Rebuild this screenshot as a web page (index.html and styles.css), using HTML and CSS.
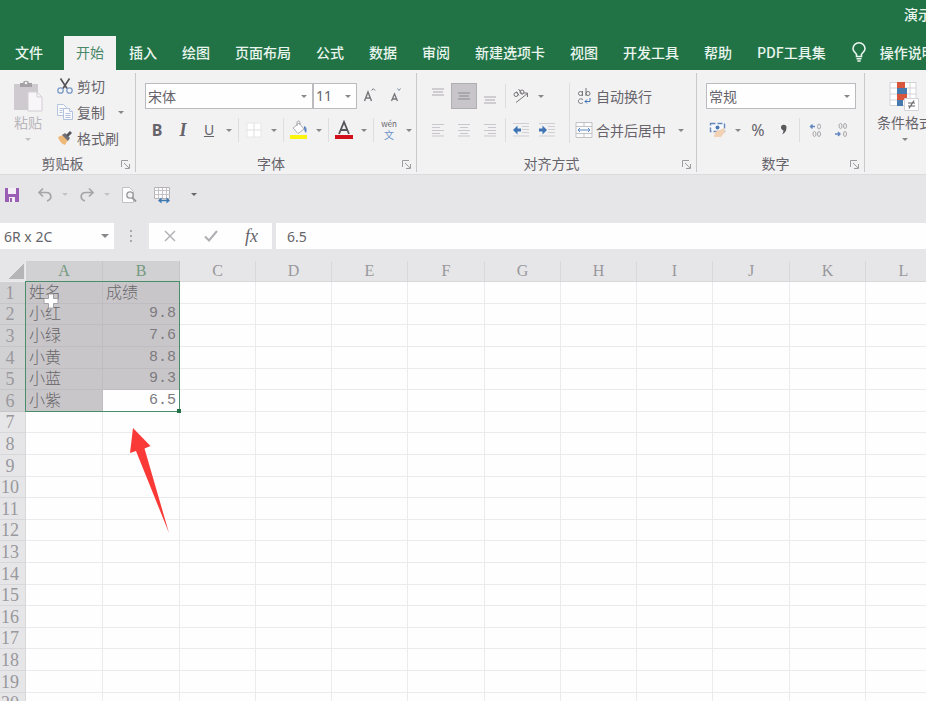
FILE: index.html
```html
<!DOCTYPE html>
<html lang="zh-CN">
<head>
  <meta charset="UTF-8">
  <meta name="viewport" content="width=device-width, initial-scale=1.0">
  <title>演示</title>
  <link rel="stylesheet" href="styles.css">
</head>
<body>
  <header class="top">
    <div class="title-bar">演示</div>
    <nav class="tabs">
      <a href="#" class="tab tab-file">文件</a>
      <a href="#" class="tab active">开始</a>
      <a href="#" class="tab">插入</a>
      <a href="#" class="tab">绘图</a>
      <a href="#" class="tab">页面布局</a>
      <a href="#" class="tab">公式</a>
      <a href="#" class="tab">数据</a>
      <a href="#" class="tab">审阅</a>
      <a href="#" class="tab">新建选项卡</a>
      <a href="#" class="tab">视图</a>
      <a href="#" class="tab">开发工具</a>
      <a href="#" class="tab">帮助</a>
      <a href="#" class="tab">PDF工具集</a>
      <a href="#" class="tab tell-me">
        <svg width="16" height="20" viewBox="0 1 16 20" fill="none" stroke="#eaf5ee" stroke-width="1.6">
          <path d="M5.5 15.5v-2.2C4.600 11.500 2 10.300 2 7.800a6 6 0 0 1 12 0c0 2.500-2.600 3.700-3.500 5.500v2.200z"/>
          <path d="M5.500 17.700h5M6.300 20h3.400"/>
        </svg>
        操作说明搜索
      </a>
    </nav>
  </header>

  <main>
    <div class="ribbon">
      <section class="group">
        <div class="group-body">
          <button type="button" class="big-btn muted">
            <svg width="32" height="32" viewBox="0 0 32 32">
              <path d="M2 4h24v26H2z" fill="#cfc9d0"/>
              <path d="M8 7V3h3c0-3 6-3 6 0h3v4z" fill="#a5a1a6"/>
              <circle cx="14" cy="3" r="1.300" fill="#f3f2f3"/>
              <path d="M16 12h9l5 5v14H16z" fill="#f8f6f8" stroke="#d3ced4"/>
              <path d="M25 12v5h5" fill="none" stroke="#d3ced4"/>
            </svg>
            <span>粘贴</span>
            <i class="caret"></i>
          </button>
          <div class="clip-list">
            <button type="button" class="text-btn">
              <svg width="18" height="18" viewBox="0 0 18 18" fill="none">
                <path d="M4.500 1.500l6.500 10M13.500 1.500L7 11.500" stroke="#55555b" stroke-width="1.700"/>
                <circle cx="4.500" cy="13.500" r="2.700" stroke="#7d9cc8" stroke-width="1.300"/>
                <circle cx="13.500" cy="13.500" r="2.700" stroke="#7d9cc8" stroke-width="1.300"/>
              </svg>
              剪切
            </button>
            <button type="button" class="text-btn">
              <svg width="18" height="18" viewBox="0 0 18 18" fill="#fafafd" stroke="#b3c3de">
                <path d="M1.500 1.500h6l3 3v8h-9z"/>
                <path d="M3.500 5.500h4M3.500 7.500h3M3.500 9.500h3"/>
                <path d="M7.500 5.500h6l3 3v8h-9z"/>
                <path d="M13.500 5.500v3h3M9.500 10.500h5M9.500 12.500h5M9.500 14.500h5"/>
              </svg>
              复制
              <i class="caret copy-caret"></i>
            </button>
            <button type="button" class="text-btn">
              <svg width="18" height="18" viewBox="0 0 18 18">
                <path d="M2 8l5-2 5 5-3 5c-3-1-6-4-7-8z" fill="#eeb878"/>
                <path d="M6 6l3-2 5 5-2 3z" fill="#707078"/>
                <path d="M10 6l4-4 2 2-4 4z" fill="#55555c"/>
              </svg>
              格式刷
            </button>
          </div>
        </div>
        <div class="group-foot"><span>剪贴板</span><button type="button" class="launcher" aria-label="剪贴板设置"><svg width="9" height="9" viewBox="0 0 9 9" fill="none" stroke="#9c9a9e"><path d="M.5 7V.5H7M3 3l5 5M8.500 4v4.500H4"/></svg></button></div>
      </section>

      <section class="group">
        <div class="group-body flush">
          <div class="rows">
            <div class="row fields">
              <label class="combo font-name"><select aria-label="字体"><option>宋体</option></select></label>
              <label class="combo font-size"><select aria-label="字号"><option>11</option></select></label>
              <button type="button" class="tool" aria-label="增大字号">
                <svg width="16" height="18" viewBox="0 0 16 18" fill="none" stroke="#77757a" stroke-width="1.400"><path d="M2.500 14L6 5l3.500 9M4 11h4"/><path d="M9.500 3.500l1.800-1.800 1.800 1.800" stroke-width="1"/></svg>
              </button>
              <button type="button" class="tool" aria-label="减小字号">
                <svg width="16" height="18" viewBox="0 0 16 18" fill="none" stroke="#77757a" stroke-width="1.300"><path d="M3.500 14L6.500 7 9.500 14M4.500 12h4"/><path d="M9.500 1.500l1.500 2 1.500-2" stroke-width="1" stroke="#7d8ba3"/></svg>
              </button>
            </div>
            <div class="row">
              <button type="button" class="tool bold">B</button>
              <button type="button" class="tool italic">I</button>
              <button type="button" class="tool underline">U</button>
              <button type="button" class="drop" aria-label="下划线选项"><i class="caret"></i></button>
              <i class="sep"></i>
              <button type="button" class="tool" aria-label="边框">
                <svg width="16" height="16" viewBox="0 0 16 16"><path d="M1 1h14v14H1z" fill="#fff" stroke="#e6e5e8"/><path d="M8 1v14M1 8h14" stroke="#dedde0"/></svg>
              </button>
              <button type="button" class="drop" aria-label="边框选项"><i class="caret"></i></button>
              <i class="sep"></i>
              <button type="button" class="tool" aria-label="填充颜色">
                <svg width="18" height="20" viewBox="0 0 18 20"><path d="M3 8l6-5 5 6-6 4.500z" fill="#fdfdfd" stroke="#b0aeb3"/><path d="M7 6V2.500c0-2 3-2 3 0V5" fill="none" stroke="#a3a1a6"/><path d="M14 6c3 1 3 4 2 7-2-2-2-4-2-7z" fill="#5f87bd"/><path d="M0 15h17v4H0z" fill="#fbf50d"/></svg>
              </button>
              <button type="button" class="drop" aria-label="填充颜色选项"><i class="caret"></i></button>
              <i class="sep"></i>
              <button type="button" class="tool" aria-label="字体颜色">
                <svg width="18" height="20" viewBox="0 0 18 20"><path d="M4 14L9 2l5 12M6 10h6" fill="none" stroke="#55535a" stroke-width="1.800"/><path d="M0 15h18v4H0z" fill="#d20f1c"/></svg>
              </button>
              <button type="button" class="drop" aria-label="字体颜色选项"><i class="caret"></i></button>
              <i class="sep"></i>
              <button type="button" class="tool phonetic" aria-label="拼音指南"><small>wén</small><b>文</b></button>
              <button type="button" class="drop" aria-label="拼音选项"><i class="caret"></i></button>
            </div>
          </div>
        </div>
        <div class="group-foot"><span>字体</span><button type="button" class="launcher" aria-label="字体设置"><svg width="9" height="9" viewBox="0 0 9 9" fill="none" stroke="#9c9a9e"><path d="M.5 7V.5H7M3 3l5 5M8.500 4v4.500H4"/></svg></button></div>
      </section>

      <section class="group">
        <div class="group-body">
          <div class="rows">
            <div class="row">
              <button type="button" class="tool" aria-label="顶端对齐"><svg width="14" height="20" viewBox="0 0 14 20" stroke="#cfcdd1" stroke-width="2"><path d="M1 3h12M2 6h10M1 9h12"/></svg></button>
              <button type="button" class="tool pressed" aria-label="垂直居中"><svg width="14" height="20" viewBox="0 0 14 20" stroke="#aaa8ad" stroke-width="2"><path d="M1 7h12M2 10h10M1 13h12"/></svg></button>
              <button type="button" class="tool" aria-label="底端对齐"><svg width="14" height="20" viewBox="0 0 14 20" stroke="#cfcdd1" stroke-width="2"><path d="M1 11h12M2 14h10M1 17h12"/></svg></button>
              <i class="sep"></i>
              <button type="button" class="tool" aria-label="方向">
                <svg width="18" height="16" viewBox="0 0 18 16" fill="none" stroke="#77757a"><circle cx="4" cy="6.500" r="2"/><path d="M4.500 3.500l2.500 4M6.500 1l4 5.500"/><circle cx="10" cy="4" r="2"/><path d="M4 14.500L15.500 5.500M11.500 5h4v4"/></svg>
              </button>
              <button type="button" class="drop" aria-label="方向选项"><i class="caret"></i></button>
            </div>
            <div class="row">
              <button type="button" class="tool" aria-label="左对齐"><svg width="14" height="14" viewBox="0 0 14 14" stroke="#c9c7cb"><path d="M1 1.500h12M1 4.500h8M1 7.500h12M1 10.500h8M1 13h12"/></svg></button>
              <button type="button" class="tool" aria-label="居中"><svg width="14" height="14" viewBox="0 0 14 14" stroke="#c9c7cb"><path d="M1 1.500h12M3 4.500h8M1 7.500h12M3 10.500h8M1 13h12"/></svg></button>
              <button type="button" class="tool" aria-label="右对齐"><svg width="14" height="14" viewBox="0 0 14 14" stroke="#c9c7cb"><path d="M1 1.500h12M5 4.500h8M1 7.500h12M5 10.500h8M1 13h12"/></svg></button>
              <i class="sep"></i>
              <button type="button" class="tool" aria-label="减少缩进"><svg width="18" height="16" viewBox="0 0 18 16"><path d="M1 1.500h16M10 4.500h7M10 7.500h7M10 10.500h7M1 14h16" stroke="#d0ced2"/><path d="M1 8l4.500-4.500v3H9v3H5.500v3z" fill="#3e74b4"/></svg></button>
              <button type="button" class="tool" aria-label="增加缩进"><svg width="18" height="16" viewBox="0 0 18 16"><path d="M1 1.500h16M10 4.500h7M10 7.500h7M10 10.500h7M1 14h16" stroke="#d0ced2"/><path d="M9 8L4.500 3.500v3H1v3h3.500v3z" fill="#3e74b4"/></svg></button>
            </div>
          </div>
          <i class="sep tall"></i>
          <div class="rows">
            <div class="row">
              <button type="button" class="text-btn">
                <svg width="18" height="18" viewBox="0 0 18 18" fill="none" stroke="#77757a"><path d="M7.500 4v5M11 1v8"/><circle cx="5.500" cy="6.500" r="2"/><circle cx="13" cy="6.500" r="2"/><path d="M8 12.500c-3-1.500-5 0-4.500 2.200.5 2 3 2.300 4.500 1"/><path d="M15 11v3.500h-5M12 12.500l-2 2 2 2" stroke="#3e74b4"/></svg>
                自动换行
              </button>
            </div>
            <div class="row">
              <button type="button" class="text-btn">
                <svg width="18" height="18" viewBox="0 0 18 18" fill="none"><path d="M1 1.500h16v15H1zM1 5.500h16M1 12.500h16M9 1.500v4M9 12.500v4" fill="#fbfbfc" stroke="#c3c1c6"/><path d="M3 9h12M5 7L3 9l2 2M13 7l2 2-2 2" stroke="#5a8ac2"/></svg>
                合并后居中
              </button>
              <button type="button" class="drop merge-drop" aria-label="合并选项"><i class="caret"></i></button>
            </div>
          </div>
        </div>
        <div class="group-foot"><span>对齐方式</span><button type="button" class="launcher" aria-label="对齐设置"><svg width="9" height="9" viewBox="0 0 9 9" fill="none" stroke="#9c9a9e"><path d="M.5 7V.5H7M3 3l5 5M8.500 4v4.500H4"/></svg></button></div>
      </section>

      <section class="group">
        <div class="group-body">
          <div class="rows">
            <div class="row fields">
              <label class="combo number-format"><select aria-label="数字格式"><option>常规</option></select></label>
            </div>
            <div class="row">
              <button type="button" class="tool" aria-label="会计数字格式">
                <svg width="18" height="16" viewBox="0 0 18 16"><path d="M1.500 1.500h14v8h-14z" fill="#f6f8fb" stroke="#6689bd" stroke-width="1.400" stroke-dasharray="5 2"/><circle cx="8.500" cy="5.500" r="2" fill="#4d79b3"/><path d="M6 10l9-4 1 4-4 5H5z" fill="#f1d2b4"/></svg>
              </button>
              <button type="button" class="drop" aria-label="货币选项"><i class="caret"></i></button>
              <button type="button" class="tool percent">%</button>
              <button type="button" class="tool" aria-label="千位分隔样式"><svg width="8" height="12" viewBox="0 0 8 12"><path d="M1 3.500a2.600 2.600 0 1 1 5.500 0C6.500 7 5 9 2 10.500 3 9 3.500 8 3.300 6.200 2 6 1 5 1 3.500z" fill="#5a585d"/></svg></button>
              <i class="sep"></i>
              <button type="button" class="tool" aria-label="增加小数位数"><svg width="14" height="16" viewBox="0 0 14 16" fill="none" stroke="#a8a6ab"><ellipse cx="11" cy="4.500" rx="1.500" ry="2.500"/><ellipse cx="6.500" cy="12" rx="1.500" ry="2.500"/><ellipse cx="11" cy="12" rx="1.500" ry="2.500"/><path d="M2 4.500h5M4.500 2.500l-2 2 2 2" stroke="#6287c0" stroke-width="1.400"/></svg></button>
              <button type="button" class="tool" aria-label="减少小数位数"><svg width="14" height="16" viewBox="0 0 14 16" fill="none" stroke="#a8a6ab"><ellipse cx="6.500" cy="4" rx="1.500" ry="2.500"/><ellipse cx="11" cy="4" rx="1.500" ry="2.500"/><ellipse cx="11" cy="12" rx="1.500" ry="2.500"/><path d="M1 12h5M4 10l2 2-2 2" stroke="#6287c0" stroke-width="1.400"/></svg></button>
            </div>
          </div>
        </div>
        <div class="group-foot"><span>数字</span><button type="button" class="launcher" aria-label="数字设置"><svg width="9" height="9" viewBox="0 0 9 9" fill="none" stroke="#9c9a9e"><path d="M.5 7V.5H7M3 3l5 5M8.500 4v4.500H4"/></svg></button></div>
      </section>

      <section class="group group-last">
        <div class="group-body">
          <button type="button" class="big-btn">
            <svg width="32" height="32" viewBox="0 0 32 32">
              <path d="M1 2.500h26v23H1z" fill="#fff" stroke="#d4d2d6"/>
              <path d="M1 8h26M1 14h26M1 20h26M21 2v24" stroke="#d4d2d6"/>
              <path d="M8 2h8v6H8zM8 14h10v6H8z" fill="#d8563c"/>
              <path d="M8 8h10v6H8zM8 20h6v6H8z" fill="#4679ae"/>
              <path d="M15.500 18.500h14v12h-14z" fill="#fff" stroke="#d4d2d6"/>
              <path d="M19 23h7M19 26h7M25 20.500l-5 8" stroke="#66646a" stroke-width="1.200"/>
            </svg>
            <span>条件格式</span>
            <i class="caret"></i>
          </button>
        </div>
      </section>
    </div>

    <div class="quick-bar">
      <button type="button" class="tool" aria-label="保存"><svg width="14" height="14" viewBox="0 0 14 14"><path d="M0 0h14v14H0z" fill="#9a5fb4"/><path d="M3 0h8v6H3zM4 9h6v5H4z" fill="#f4eef7"/><path d="M5 10h2v4H5z" fill="#9a5fb4"/></svg></button>
      <button type="button" class="tool" aria-label="撤消"><svg width="16" height="16" viewBox="0 0 16 16" fill="none" stroke="#a5a4a8" stroke-width="1.700"><path d="M6 1.500L2 5.500l4 4M2 5.500h7c6 0 6.500 7 1 8.500"/></svg></button>
      <button type="button" class="drop" aria-label="撤消选项"><i class="caret pale"></i></button>
      <button type="button" class="tool" aria-label="恢复"><svg width="16" height="16" viewBox="0 0 16 16" fill="none" stroke="#a5a4a8" stroke-width="1.700"><path d="M10 1.500l4 4-4 4M14 5.500H7c-6 0-6.500 7-1 8.500"/></svg></button>
      <button type="button" class="drop" aria-label="恢复选项"><i class="caret pale"></i></button>
      <button type="button" class="tool" aria-label="打印预览"><svg width="16" height="16" viewBox="0 0 16 16"><path d="M1.500.5h7l4 4v11h-11z" fill="#fcfcfc" stroke="#c2c0c4"/><circle cx="9" cy="8" r="3.200" fill="#f3f3f5" stroke="#99979d" stroke-width="1.300"/><path d="M11 10.500l4 4" stroke="#99979d" stroke-width="1.800"/></svg></button>
      <button type="button" class="tool" aria-label="列宽"><svg width="18" height="18" viewBox="0 0 18 18"><path d="M1.500 1.500h15v11h-15z" fill="#fbfbfc" stroke="#b4b2b7"/><path d="M1 4.500h16M1 8.500h16M5.500 2v10M9.500 2v10M13.500 2v10" stroke="#c4c2c7"/><path d="M6 14.500h10" stroke="#3e78b0" stroke-width="1.500"/><path d="M8.500 11.500v6l-3.500-3zM13.500 11.500v6l3.500-3z" fill="#3e78b0"/></svg></button>
      <button type="button" class="drop" aria-label="自定义快速访问工具栏"><i class="caret dark"></i></button>
    </div>

    <div class="formula-bar">
      <label class="name-box"><input type="text" value="6R x 2C" aria-label="名称框"></label>
      <svg class="dots" width="4" height="14" viewBox="0 0 4 14" fill="#a9a8ac"><path d="M1 1h2v2H1zM1 6h2v2H1zM1 11h2v2H1z"/></svg>
      <div class="formula-tools">
        <button type="button" aria-label="取消"><svg width="12" height="12" viewBox="0 0 12 12" stroke="#b3b2b6" stroke-width="1.500"><path d="M1 1l10 10M11 1L1 11"/></svg></button>
        <button type="button" aria-label="输入"><svg width="14" height="12" viewBox="0 0 14 12" fill="none" stroke="#b0afb3" stroke-width="2"><path d="M1 6.500L5 10.500 13 1"/></svg></button>
        <button type="button" class="fx">fx</button>
      </div>
      <input type="text" class="formula-input" value="6.5" aria-label="编辑栏">
    </div>

    <div class="sheet">
      <table class="grid">
        <colgroup>
          <col class="col-head">
          <col class="col-wide"><col class="col-wide"><col><col><col>
          <col class="col-wide"><col><col><col><col class="col-wide"><col><col>
        </colgroup>
        <thead>
          <tr id="columnRow"><td class="corner"></td></tr>
        </thead>
        <tbody id="sheetBody"></tbody>
      </table>
      <div class="selection"></div>
      <svg class="cursor" width="18" height="18" viewBox="0 0 18 18"><path d="M6.500 2h5v4.500H16v5h-4.500V16h-5v-4.500H2v-5h4.500z" fill="#fff" stroke="#a3a1a5"/></svg>
      <svg class="pointer" width="42" height="108" viewBox="0 0 42 108"><path d="M5 1l17.500 18-6 2.500L41 106 8 24l-6 2z" fill="#f93a37"/></svg>
    </div>
  </main>

  <script>
    var columns = 'ABCDEFGHIJKL'.split('');
    var rows = [
      ['姓名', '成绩'],
      ['小红', '9.8'],
      ['小绿', '7.6'],
      ['小黄', '8.8'],
      ['小蓝', '9.3'],
      ['小紫', '6.5']
    ];
    var rowCount = 20;

    columns.forEach(function(letter, i) {
      var th = document.createElement('th');
      th.scope = 'col';
      th.textContent = letter;
      if (i < 2) th.className = 'picked';
      document.getElementById('columnRow').appendChild(th);
    });

    for (var r = 0; r < rowCount; r++) {
      var tr = document.createElement('tr');
      var head = document.createElement('th');
      head.scope = 'row';
      head.textContent = r + 1;
      if (r < rows.length) head.className = 'picked';
      tr.appendChild(head);
      for (var c = 0; c < columns.length; c++) {
        var td = document.createElement('td');
        if (rows[r] && rows[r][c]) {
          td.textContent = rows[r][c];
          td.className = 'picked';
          if (!isNaN(rows[r][c])) td.classList.add('number');
          // the active cell keeps its white background
          if (r === 5 && c === 1) td.classList.add('current');
        }
        tr.appendChild(td);
      }
      document.getElementById('sheetBody').appendChild(tr);
    }
  </script>
</body>
</html>
```
FILE: styles.css
```css
* {
  box-sizing: border-box;
}

body {
  margin: 0;
  height: 100vh;
  overflow: hidden;
  background-color: #e6e6e8;
  color: #66646a;
  font-family: "Noto Sans", "Noto Sans CJK SC", sans-serif;
  font-size: 14px;
  line-height: 20px;
}

button, input, select {
  margin: 0;
  padding: 0;
  border: none;
  background: none;
  color: inherit;
  font: inherit;
}

svg {
  display: block;
  flex: none;
}

/* title and tabs */
.top {
  background-color: #217346;
  color: #eaf5ee;
  font-weight: 500;
  font-family: "Noto Sans CJK SC", sans-serif;
  white-space: nowrap;
  overflow: hidden;
}

.title-bar {
  height: 36px;
  padding-top: 4px;
  padding-left: calc(100% - 22px);
}

.tabs {
  display: flex;
  gap: 1px;
  padding-left: 3px;
}

.tab {
  flex: none;
  padding: 6px 12px 8px;
  color: inherit;
  text-decoration: none;
}

.tab-file {
  margin-right: 8px;
}

.tab.active {
  background-color: #f3f2f3;
  color: #4a8767;
  font-weight: 400;
}

.tell-me {
  display: flex;
  align-items: center;
  gap: 13px;
}

/* ribbon */
.ribbon {
  display: flex;
  height: 105px;
  padding: 3px 0 2px;
  background-color: #f3f2f3;
  border-bottom: 1px solid #dcdbdd;
  font-family: "Noto Sans CJK SC", sans-serif;
  white-space: nowrap;
  overflow: hidden;
}

.group {
  flex: none;
  display: flex;
  flex-direction: column;
  justify-content: space-between;
  padding-left: 8px;
  border-right: 1px solid #c9c8cb;
}

.group-last {
  border-right: none;
}

.group-body {
  display: flex;
  padding-right: 8px;
}

.group-body.flush {
  padding-right: 0;
}

.rows {
  display: flex;
  flex-direction: column;
  gap: 8px;
  padding-top: 10px;
}

.row {
  display: flex;
  align-items: center;
  height: 26px;
}

.fields {
  padding-left: 1px;
}

.group-foot {
  display: flex;
  align-items: center;
  height: 18px;
  text-align: center;
}

.group-foot span {
  flex: 1;
}

.launcher {
  width: 18px;
  padding: 2px 5px 0 4px;
}

.big-btn {
  display: flex;
  flex-direction: column;
  align-items: center;
  padding: 7px 4px 0;
}

.big-btn span {
  padding-bottom: 6px;
}

.muted {
  width: 40px;
  color: #b9b7bb;
}

.clip-list {
  display: flex;
  flex-direction: column;
  width: 71px;
  margin-left: 8px;
}

.text-btn {
  display: flex;
  align-items: center;
  gap: 3px;
  height: 26px;
}

.copy-caret {
  margin-left: 10px;
}

.caret {
  flex: none;
  width: 6px;
  border: 3px solid transparent;
  border-top-color: #88868b;
  border-bottom: none;
}

.muted .caret,
.caret.pale {
  border-top-color: #c3c2c6;
}

.caret.dark {
  border-top-color: #66656a;
}

.tool {
  display: flex;
  align-items: center;
  justify-content: center;
  width: 26px;
  height: 26px;
}

.drop {
  display: flex;
  align-items: center;
  justify-content: center;
  width: 14px;
  height: 26px;
}

.sep {
  width: 1px;
  height: 24px;
  margin: 0 2px;
  background-color: #dedde0;
}

.sep.tall {
  height: 60px;
  margin: 10px 5px 0 9px;
}

.pressed {
  background-color: #c7c5c9;
  border: 1px solid #b0aeb3;
}

.bold {
  font-family: "Noto Sans", sans-serif;
  font-weight: 700;
  font-size: 16px;
}

.italic {
  font-family: "Liberation Serif", serif;
  font-weight: 700;
  font-style: italic;
  font-size: 18px;
}

.underline {
  font-family: "Noto Sans", sans-serif;
  text-decoration: underline;
}

.percent {
  font-family: "Noto Sans", sans-serif;
  font-size: 16px;
}

.phonetic {
  flex-direction: column;
}

.phonetic small {
  font-size: 8px;
  line-height: 10px;
}

.phonetic b {
  color: #6d93c7;
  font-size: 10px;
  font-weight: 400;
  line-height: 12px;
}

.merge-drop {
  margin-left: 8px;
}

.combo {
  position: relative;
  height: 26px;
  border: 1px solid #bbbabe;
  background-color: #fefefe;
}

.combo select {
  width: 100%;
  height: 24px;
  padding-left: 2px;
  appearance: none;
}

.combo::after,
.name-box::after {
  content: "";
  position: absolute;
  top: 11px;
  right: 5px;
  border: 3px solid transparent;
  border-top-color: #88868b;
  border-bottom: none;
}

.font-name {
  width: 168px;
}

.font-size {
  width: 44px;
}

.font-size select {
  font-family: "Noto Sans", sans-serif;
}

.number-format {
  width: 150px;
}

/* quick access toolbar */
.quick-bar {
  display: flex;
  align-items: center;
  gap: 1px;
  height: 39px;
}

.quick-bar .tool {
  width: 24px;
}

.quick-bar .tool + .tool {
  margin-left: 8px;
}

.quick-bar .drop + .tool {
  margin-left: 2px;
}

.quick-bar .tool + .drop:last-child {
  margin-left: 12px;
}

/* formula bar */
.formula-bar {
  display: flex;
  align-items: center;
  padding: 9px 0 12px;
  font-family: "Noto Sans", sans-serif;
}

.name-box {
  position: relative;
  width: 114px;
  height: 26px;
  background-color: #fefefe;
}

.name-box input {
  width: 100px;
  height: 26px;
  padding-left: 4px;
}

.name-box::after {
  border-width: 4px 4px 0;
}

.dots {
  margin: 0 16px 0 15px;
}

.formula-tools {
  display: flex;
  height: 26px;
  background-color: #fefefe;
}

.formula-tools button {
  display: flex;
  align-items: center;
  justify-content: center;
  width: 41px;
}

.formula-tools .fx {
  font-family: "Liberation Serif", serif;
  font-style: italic;
  font-size: 18px;
}

.formula-input {
  flex: 1;
  height: 26px;
  margin-left: 4px;
  padding-left: 11px;
  background-color: #fefefe;
}

/* worksheet */
.sheet {
  position: relative;
}

.grid {
  width: 100%;
  table-layout: fixed;
  border-spacing: 0;
  font-size: 16px;
}

.grid col {
  width: 76px;
}

.grid .col-head {
  width: 26px;
}

.grid .col-wide {
  width: 77px;
}

.grid th,
.grid td {
  padding: 0;
  border-right: 1px solid #ebebed;
  border-bottom: 1px solid #ebebed;
  line-height: 20px;
  white-space: nowrap;
}

.grid td {
  padding: 0 3px;
  background-color: #fefefe;
  color: #68666a;
  font-family: "Liberation Serif", "Noto Sans CJK SC", serif;
  font-weight: 300;
}

.grid th {
  background-color: #e6e6e8;
  border-color: #d8d8db;
  color: #99989c;
  font-family: "Liberation Serif", serif;
  font-weight: 400;
}

.grid tbody th {
  padding-right: 5px;
  font-size: 18px;
}

.grid tbody tr {
  height: 22px;
}

.grid tbody tr:nth-child(5n),
.grid tbody tr:nth-child(5n + 2) {
  height: 21px;
}

.grid th.picked {
  background-color: #d1d1d3;
  border-color: #c6c6c9;
}

.grid thead th.picked {
  color: #74997f;
}

.grid td.picked {
  background-color: #c8c6c9;
  border-color: #bfbdc1;
}

.grid td.current {
  background-color: #fefefe;
}

.grid td.number {
  color: #7d7b80;
  text-align: right;
  font-family: "Liberation Mono", monospace;
  font-size: 15px;
}

.grid .corner {
  background: linear-gradient(135deg, transparent 50%, #b5b5b8 50%) no-repeat 8px 3px / 16px 15px #e6e6e8;
}

.selection {
  position: absolute;
  top: 20px;
  left: 25px;
  width: 155px;
  height: 131px;
  border: 1px solid #4a8d69;
}

.selection::after {
  content: "";
  position: absolute;
  right: -2px;
  bottom: -2px;
  width: 4px;
  height: 4px;
  background-color: #217346;
}

.cursor {
  position: absolute;
  top: 31px;
  left: 42px;
}

/* red arrow pointing at the active cell */
.pointer {
  position: absolute;
  top: 166px;
  left: 128px;
}
```
